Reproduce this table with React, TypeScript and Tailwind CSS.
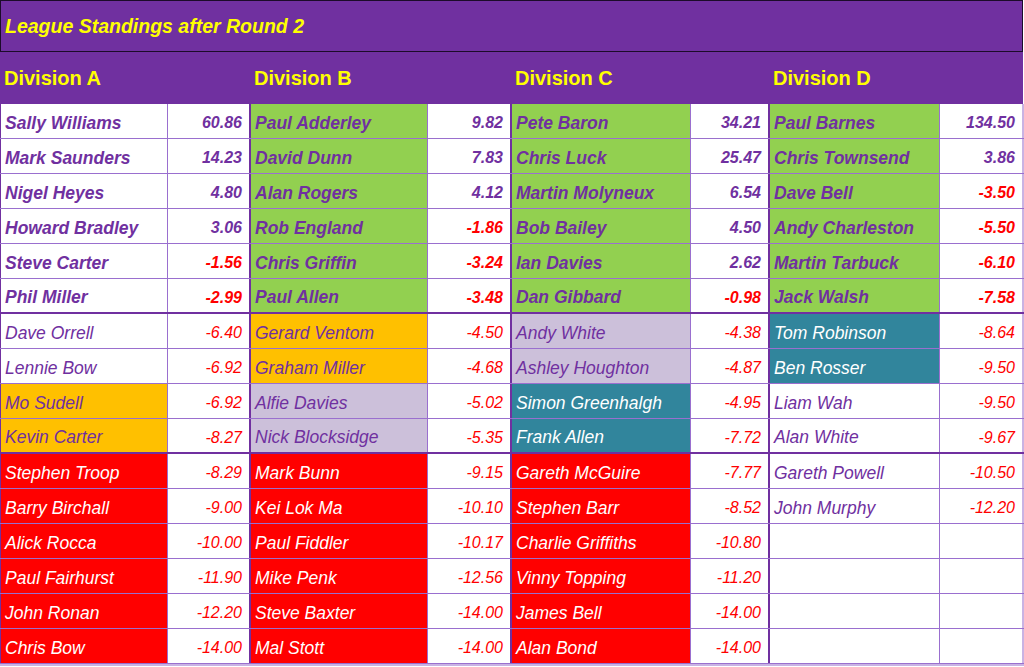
type Row = { name: string; score: string; bg: string };

type Division = { title: string; nameW: string; scoreW: string; last?: boolean; rows: Row[] };

const W = 'white';
const G = 'green';
const O = 'orange';
const L = 'lav';
const T = 'teal';
const R = 'red';

const bgClass: Record<string, string> = {
  white: 'bg-white text-[#7030a0]',
  green: 'bg-[#92d050] text-[#7030a0]',
  orange: 'bg-[#ffc000] text-[#7030a0]',
  lav: 'bg-[#ccc0da] text-[#7030a0]',
  teal: 'bg-[#31859c] text-white',
  red: 'bg-[#ff0000] text-white',
};

const r = (name: string, score: string, bg: string): Row => ({ name, score, bg });

const divisions: Division[] = [
  {
    title: 'Division A',
    nameW: 'w-[168px] border-l border-l-[#7030a0]',
    scoreW: 'w-[83px]',
    rows: [
      r('Sally Williams', '60.86', W),
      r('Mark Saunders', '14.23', W),
      r('Nigel Heyes', '4.80', W),
      r('Howard Bradley', '3.06', W),
      r('Steve Carter', '-1.56', W),
      r('Phil Miller', '-2.99', W),
      r('Dave Orrell', '-6.40', W),
      r('Lennie Bow', '-6.92', W),
      r('Mo Sudell', '-6.92', O),
      r('Kevin Carter', '-8.27', O),
      r('Stephen Troop', '-8.29', R),
      r('Barry Birchall', '-9.00', R),
      r('Alick Rocca', '-10.00', R),
      r('Paul Fairhurst', '-11.90', R),
      r('John Ronan', '-12.20', R),
      r('Chris Bow', '-14.00', R),
    ],
  },
  {
    title: 'Division B',
    nameW: 'w-[177px]',
    scoreW: 'w-[84px]',
    rows: [
      r('Paul Adderley', '9.82', G),
      r('David Dunn', '7.83', G),
      r('Alan Rogers', '4.12', G),
      r('Rob England', '-1.86', G),
      r('Chris Griffin', '-3.24', G),
      r('Paul Allen', '-3.48', G),
      r('Gerard Ventom', '-4.50', O),
      r('Graham Miller', '-4.68', O),
      r('Alfie Davies', '-5.02', L),
      r('Nick Blocksidge', '-5.35', L),
      r('Mark Bunn', '-9.15', R),
      r('Kei Lok Ma', '-10.10', R),
      r('Paul Fiddler', '-10.17', R),
      r('Mike Penk', '-12.56', R),
      r('Steve Baxter', '-14.00', R),
      r('Mal Stott', '-14.00', R),
    ],
  },
  {
    title: 'Division C',
    nameW: 'w-[179px]',
    scoreW: 'w-[79px]',
    rows: [
      r('Pete Baron', '34.21', G),
      r('Chris Luck', '25.47', G),
      r('Martin Molyneux', '6.54', G),
      r('Bob Bailey', '4.50', G),
      r('Ian Davies', '2.62', G),
      r('Dan Gibbard', '-0.98', G),
      r('Andy White', '-4.38', L),
      r('Ashley Houghton', '-4.87', L),
      r('Simon Greenhalgh', '-4.95', T),
      r('Frank Allen', '-7.72', T),
      r('Gareth McGuire', '-7.77', R),
      r('Stephen Barr', '-8.52', R),
      r('Charlie Griffiths', '-10.80', R),
      r('Vinny Topping', '-11.20', R),
      r('James Bell', '-14.00', R),
      r('Alan Bond', '-14.00', R),
    ],
  },
  {
    title: 'Division D',
    nameW: 'w-[170px]',
    scoreW: 'w-[84px]',
    last: true,
    rows: [
      r('Paul Barnes', '134.50', G),
      r('Chris Townsend', '3.86', G),
      r('Dave Bell', '-3.50', G),
      r('Andy Charleston', '-5.50', G),
      r('Martin Tarbuck', '-6.10', G),
      r('Jack Walsh', '-7.58', G),
      r('Tom Robinson', '-8.64', T),
      r('Ben Rosser', '-9.50', T),
      r('Liam Wah', '-9.50', W),
      r('Alan White', '-9.67', W),
      r('Gareth Powell', '-10.50', W),
      r('John Murphy', '-12.20', W),
      r('', '', W),
      r('', '', W),
      r('', '', W),
      r('', '', W),
    ],
  },
];

const DivisionColumn = ({ div }: { div: Division }) => (
  <div className="flex flex-col">
    {div.rows.map((row, i) => {
      const top = i < 6;
      const thick = i === 5 || i === 9;
      const rowBorder = thick
        ? 'border-b-2 border-b-[#7030a0] h-[35px]'
        : 'border-b border-b-[#9a6fcf] h-[35px]';
      const weight = top ? 'font-bold' : 'font-normal';
      const negative = row.score.startsWith('-');
      return (
        <div key={i} className={`flex ${rowBorder}`}>
          <div
            className={`${div.nameW} ${bgClass[row.bg]} ${weight} flex items-center pt-[4px] pl-[4px] border-r border-r-[#9a6fcf] italic text-[17.5px] whitespace-nowrap overflow-hidden`}
          >
            {row.name}
          </div>
          <div
            className={`${div.scoreW} bg-white ${weight} flex items-center justify-end pt-[4px] pr-[7px] italic text-[16px] ${
              negative ? 'text-[#ff0000]' : 'text-[#7030a0]'
            } ${div.last ? 'border-r-2 border-r-[#c9b3e3]' : 'border-r-2 border-r-[#7030a0]'}`}
          >
            {row.score}
          </div>
        </div>
      );
    })}
  </div>
);

export default function App() {
  return (
    <div
      className="w-[1024px] h-[667px] bg-white overflow-hidden"
      style={{ fontFamily: '"Liberation Sans", Arial, sans-serif' }}
    >
      <div className="h-[52px] w-[1023px] bg-[#7030a0] border border-[#1c0b2a] flex items-center pl-[4px] pt-[2px]">
        <span className="text-[#ffff00] font-bold italic text-[19.5px]">League Standings after Round 2</span>
      </div>
      <div className="h-[52px] w-[1023px] bg-[#7030a0] flex items-center">
        <div className="w-[251px] pl-[4px] text-[#ffff00] font-bold text-[20px]">Division A</div>
        <div className="w-[261px] pl-[3px] text-[#ffff00] font-bold text-[20px]">Division B</div>
        <div className="w-[258px] pl-[3px] text-[#ffff00] font-bold text-[20px]">Division C</div>
        <div className="w-[253px] pl-[3px] text-[#ffff00] font-bold text-[20px]">Division D</div>
      </div>
      <div className="flex border-b-2 border-b-[#c9b3e3] w-[1024px]">
        {divisions.map((d) => (
          <DivisionColumn key={d.title} div={d} />
        ))}
      </div>
    </div>
  );
}
